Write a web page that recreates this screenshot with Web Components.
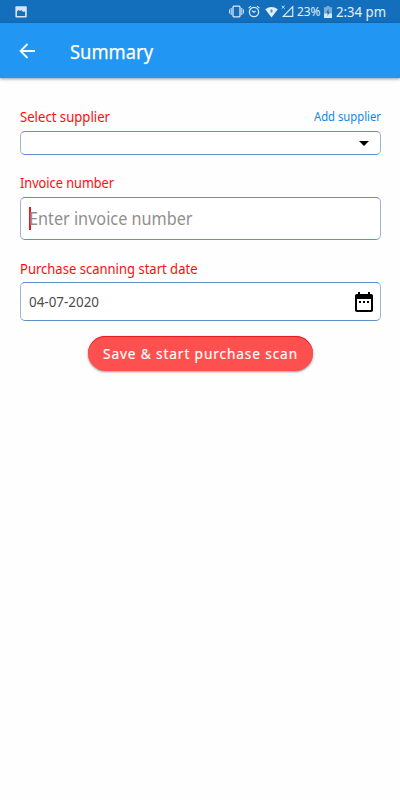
<!DOCTYPE html>
<html lang="en">
<head>
<meta charset="utf-8">
<title>Summary</title>
<style>
html,body{margin:0;height:100%;background:#fefefe}
body{font-family:"Noto Sans","Open Sans",sans-serif}
</style>
</head>
<body>
<summary-page></summary-page>
<script>
const define = (name, html, ready) => customElements.define(name, class extends HTMLElement {
  connectedCallback() {
    if (this.shadowRoot) return;
    const t = document.createElement('template');
    t.innerHTML = html;
    this.attachShadow({mode: 'open'}).append(t.content.cloneNode(true));
    if (ready) ready(this, this.shadowRoot);
  }
});

// One line of text condensed or widened to the width given in its attribute.
define('fit-text', `<style>
:host{display:block;white-space:nowrap;flex:none}
span{display:inline-block;transform-origin:0 50%}
</style><span><slot></slot></span>`, (el, root) => {
  const span = root.querySelector('span');
  const w = Number(el.getAttribute('width'));
  const natural = span.getBoundingClientRect().width;
  span.style.transform = `scaleX(${w / natural})`;
  el.style.width = w + 'px';
});

define('status-bar', `<style>
:host{display:flex;align-items:center;height:23px;background:#136fbc;color:#e3effa;font-size:12.8px;line-height:23px;padding:0 14px 0 15px}
svg{display:block;flex:none}
.gap{flex:1}
.alarm{margin-left:4px}.wifi{margin-left:5px}.cell{margin-left:3px}
.pct{margin-left:3px}.bat{margin-left:4px}.time{margin-left:4px;font-size:14.4px}
</style>
<svg width="12" height="12" viewBox="0 0 12 12"><rect x=".4" y=".2" width="11.4" height="11.3" rx="1" fill="#d5e4f3"/><path d="M2 10V5.4L3.5 4l1.7 1 1-1L8 6l1.3-.7.8 1.2V10z" fill="#136fbc"/></svg>
<div class="gap"></div>
<svg width="15" height="13" viewBox="0 0 15 13" fill="none" stroke="#dceaf7"><rect x="4" y="1.2" width="7" height="10.6" rx="1" stroke-width="1.3"/><path d="M2.2 3v7M.6 4.5v4M12.8 3v7M14.4 4.5v4" stroke-width="1"/></svg>
<svg class="alarm" width="12" height="13" viewBox="0 0 12 13" fill="none" stroke="#dceaf7"><circle cx="6" cy="7" r="4.6" stroke-width="1.3"/><path d="M.6 3.2L3 1.2M11.4 3.2L9 1.2M4 5.7l2 1.5 1.6-1.2" stroke-width="1.1"/></svg>
<svg class="wifi" width="13" height="12" viewBox="0 0 13 12"><path d="M.2 3.2Q6.5-1.4 12.8 3.2L6.5 11.4z" fill="#e3effa"/><ellipse cx="6.500" cy="5" rx="1.200" ry="1.700" fill="#4d93ce"/></svg>
<svg class="cell" width="13" height="13" viewBox="0 0 13 13" fill="none" stroke="#dceaf7"><path d="M11.7 1.7v9.6H2.3z" stroke-width="1.2"/><path d="M.7.8l3 2.8M3.7.8l-3 2.8" stroke-width=".9"/></svg>
<fit-text class="pct" width="23.5">23%</fit-text>
<svg class="bat" width="8" height="12" viewBox="0 0 8 12"><path d="M2.5 0h3v1.2H8V12H0V1.2h2.5z" fill="#78aed9"/><path d="M0 7.5h8V12H0z" fill="#d5e6f5"/><path d="M4.6 2.5L2.2 6.8h1.4V10l2.2-4.3H4.4z" fill="#136fbc"/></svg>
<fit-text class="time" width="50">2:34 pm</fit-text>`);

define('app-bar', `<style>
:host{display:flex;align-items:center;height:54.5px;background:#2196f3;color:#fff;box-shadow:0 1px 3px rgba(0,0,0,.4);padding-left:19px}
svg{display:block;margin-right:35px;padding-top:1px}
fit-text{font-size:20.4px;line-height:28px;padding-top:1px;-webkit-text-stroke:.25px #fff}
</style>
<svg width="16" height="16" viewBox="0 0 16 16" fill="none" stroke="#f4faff" stroke-width="1.8"><path d="M16 8H2M8.5 1L1.6 8l6.9 7"/></svg>
<fit-text width="83"><slot></slot></fit-text>`);

define('field-box', `<style>
:host{display:flex;box-sizing:border-box;align-items:center;border:1px solid #5d8fc8;border-left-color:#9db2d6;border-right-color:#9db2d6;border-radius:5px;background:#fff}
</style><slot></slot>`);

define('field-label', `<style>
:host{display:flex;justify-content:space-between;color:#ff0c0c;font-size:14px;line-height:18px;height:18px}
::slotted([slot=action]){color:#0f86ee;font-size:12.4px}
</style><slot></slot><slot name="action"></slot>`);

define('pill-button', `<style>
:host{display:flex;justify-content:center;box-sizing:border-box;width:225px;height:35px;border-radius:18px;background:#ff5050;color:#fff;box-shadow:0 1px 2.5px rgba(0,0,0,.4),inset 0 1px 0 #e31d1d;font-size:14.4px;line-height:36px;letter-spacing:.9px;-webkit-text-stroke:.15px #fff}
</style><slot></slot>`);

define('summary-page', `<style>
:host{display:flex;flex-direction:column;height:800px;width:400px;overflow:hidden}
main{display:flex;flex-direction:column;padding:30.5px 19.5px 0 19.5px}
.supplier{height:24px;margin-top:5px;justify-content:flex-end}
.l2{margin-top:19px}
.invoice{height:43px;margin-top:5px;padding:0 0 1px 8.5px;color:#8f8f8f;font-size:17.4px}
.caret{width:2px;height:23px;background:#f01818;margin-right:-2px}
.l3{margin-top:20px}
.date{height:39px;margin-top:4px;padding:0 7px 0 8.500px;justify-content:space-between;color:#4d4d4d;font-size:13.8px}
.arrow{margin-right:11px}
pill-button{align-self:center;margin:14.5px 0 0 0}
svg{display:block}
</style>
<status-bar></status-bar>
<app-bar>Summary</app-bar>
<main>
<field-label><fit-text width="90">Select supplier</fit-text><fit-text slot="action" width="67">Add supplier</fit-text></field-label>
<field-box class="supplier"><svg class="arrow" width="10" height="5" viewBox="0 0 10 5"><path d="M0 0h10L5 5z"/></svg></field-box>
<field-label class="l2"><fit-text width="94">Invoice number</fit-text></field-label>
<field-box class="invoice"><div class="caret"></div><fit-text width="163.5">Enter invoice number</fit-text></field-box>
<field-label class="l3"><fit-text width="177.5">Purchase scanning start date</fit-text></field-label>
<field-box class="date"><fit-text width="70">04-07-2020</fit-text>
<svg width="18" height="20" viewBox="0 0 18 20"><path d="M3 0h2v2h8V0h2v2h1.2Q18 2 18 3.8v14.4Q18 20 16.2 20H1.8Q0 20 0 18.200V3.800Q0 2 1.800 2H3zM2 7v11h14V7z" fill-rule="evenodd"/><path d="M4 9h2v2H4zm4 0h2v2H8zm4 0h2v2h-2z"/></svg></field-box>
<pill-button><fit-text width="195">Save &amp; start purchase scan</fit-text></pill-button>
</main>`);
</script>
</body>
</html>
